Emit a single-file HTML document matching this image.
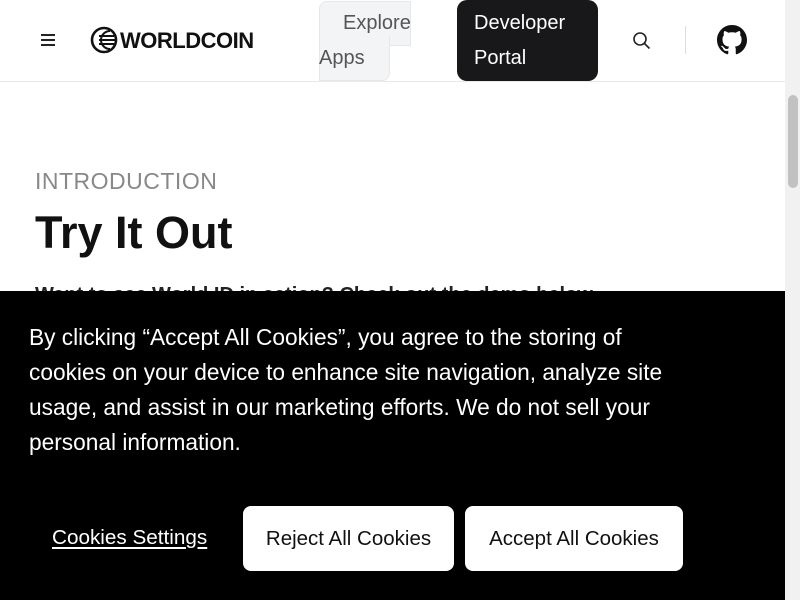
<!DOCTYPE html>
<html><head><meta charset="utf-8"><style>
*{margin:0;padding:0;box-sizing:border-box}
body{width:800px;height:600px;overflow:hidden;font-family:"Liberation Sans",sans-serif;background:#fff;position:relative}
.hdr{position:absolute;left:0;top:0;width:785px;height:82px;border-bottom:1px solid #e8e8e8;background:#fff}
.abs{position:absolute}
.sb{position:absolute;right:0;top:0;width:15px;height:600px;background:#f1f1f1}
.banner{position:absolute;left:0;top:291px;width:785px;height:309px;background:#000;color:#fff}
.btn{position:absolute;top:215px;height:65px;background:#fff;color:#111;border-radius:8px;font-size:20.5px;display:flex;align-items:center;justify-content:center}
</style></head><body>
<div class="hdr">
 <div class="abs" style="left:41px;top:34px;width:14px;height:2px;background:#222;box-shadow:0 5px 0 #222,0 10px 0 #222"></div>
 <svg class="abs" style="left:90px;top:26px" width="28" height="28" viewBox="0 0 28 28"><circle cx="14" cy="14" r="12" fill="none" stroke="#111" stroke-width="2.6"/><path d="M9 14h17M9 10h15M9 18h15" stroke="#111" stroke-width="2"/><path d="M20 5a9 9 0 0 0 0 18" fill="none" stroke="#111" stroke-width="2"/></svg>
 <div class="abs" style="left:120px;top:28px;font-size:22px;font-weight:bold;letter-spacing:-0.5px;color:#111">WORLDCOIN</div>
 <div class="abs" style="left:319px;top:1px;width:92px;height:45px;background:#f3f4f6;border:1px solid #e5e7eb;border-radius:8px 0 0 0"></div>
 <div class="abs" style="left:319px;top:36px;width:71px;height:45px;background:#f3f4f6;border:1px solid #e5e7eb;border-radius:0 0 8px 0;border-top:none"></div>
 <div class="abs" style="left:343px;top:12px;font-size:20px;color:#555">Explore</div>
 <div class="abs" style="left:319px;top:47px;font-size:20px;color:#555">Apps</div>
 <div class="abs" style="left:457px;top:0;width:141px;height:81px;background:#18181b;border-radius:10px"></div>
 <div class="abs" style="left:474px;top:6px;font-size:20px;color:#fff;line-height:35px">Developer<br>Portal</div>
 <svg class="abs" style="left:632px;top:31px" width="20" height="20" viewBox="0 0 20 20"><circle cx="8" cy="8" r="6" fill="none" stroke="#222" stroke-width="1.6"/><path d="M12.5 12.5l5 5" stroke="#222" stroke-width="1.6"/></svg>
 <div class="abs" style="left:685px;top:26px;width:1px;height:28px;background:#ddd"></div>
 <svg class="abs" style="left:717px;top:25px" width="30" height="30" viewBox="0 0 16 16"><path fill="#111" d="M8 0C3.580 0 0 3.58 0 8c0 3.54 2.29 6.53 5.47 7.59.4.07.55-.17.55-.38 0-.19-.01-.82-.01-1.490-2.01.37-2.53-.49-2.69-.94-.09-.23-.48-.94-.82-1.130-.28-.15-.68-.52-.01-.53.63-.01 1.080.58 1.230.82.72 1.21 1.870.87 2.330.66.07-.52.28-.87.51-1.070-1.78-.2-3.64-.89-3.64-3.95 0-.87.31-1.59.82-2.15-.08-.2-.36-1.02.08-2.12 0 0 .67-.21 2.2.82.64-.18 1.32-.27 2-.27.68 0 1.36.09 2 .27 1.53-1.04 2.2-.82 2.2-.82.44 1.1.16 1.92.08 2.12.51.56.82 1.27.82 2.15 0 3.07-1.87 3.75-3.65 3.95.29.25.54.73.54 1.48 0 1.07-.01 1.93-.01 2.2 0 .21.15.46.55.38A8.013 8.013 0 0016 8c0-4.42-3.58-8-8-8z"/></svg>
</div>
<div class="abs" style="left:35px;top:168px;font-size:23px;color:#888;letter-spacing:0.5px">INTRODUCTION</div>
<div class="abs" style="left:35px;top:207px;font-size:45px;font-weight:bold;color:#111">Try It Out</div>
<div class="abs" style="left:35px;top:284px;font-size:20px;font-weight:bold;color:#222">Want to see World ID in action? Check out the demo below</div>
<div class="banner">
 <div class="abs" style="left:29px;top:29px;width:665px;font-size:22.7px;line-height:35px">By clicking “Accept All Cookies”, you agree to the storing of cookies on your device to enhance site navigation, analyze site usage, and assist in our marketing efforts. We do not sell your personal information.</div>
 <div class="abs" style="left:52px;top:235px;font-size:20.7px;text-decoration:underline;text-underline-offset:3px">Cookies Settings</div>
 <div class="btn" style="left:243px;width:211px">Reject All Cookies</div>
 <div class="btn" style="left:465px;width:218px">Accept All Cookies</div>
</div>
<div class="sb"><div class="abs" style="top:95px;height:93px;left:3px;width:10px;background:#c1c1c1;border-radius:5px"></div></div>
</body></html>
